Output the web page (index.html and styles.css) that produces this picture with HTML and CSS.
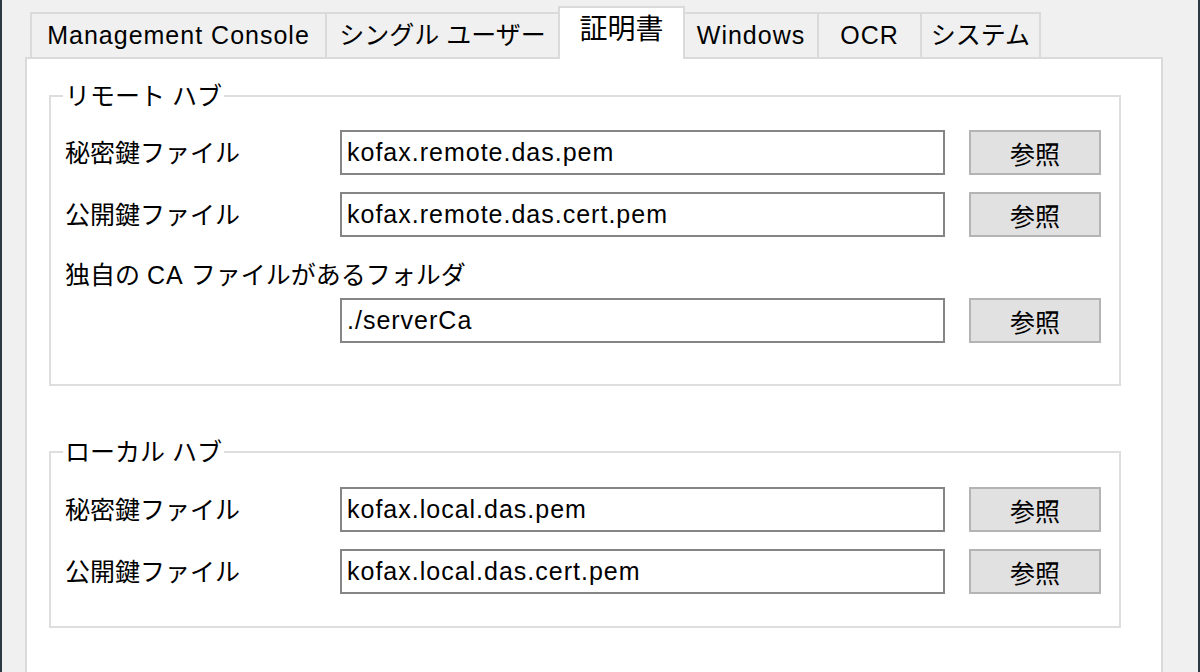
FILE: index.html
```html
<!DOCTYPE html>
<html lang="ja">
<head>
<meta charset="utf-8">
<title>証明書</title>
<link rel="stylesheet" href="styles.css">
</head>
<body>
<div class="window">
  <div class="tabctl">
    <div class="tabs">
      <div class="tab w1"><span class="lat">Management Console</span></div>
      <div class="tab w2">シングル ユーザー</div>
      <div class="tab tab-active w3">証明書</div>
      <div class="tab w4"><span class="lat">Windows</span></div>
      <div class="tab w5"><span class="lat">OCR</span></div>
      <div class="tab w6">システム</div>
    </div>
    <div class="panel">
      <fieldset class="group g1">
        <legend class="legend">リモート ハブ</legend>
        <div class="row">
          <div class="label">秘密鍵ファイル</div>
          <div class="field">kofax.remote.das.pem</div>
          <div class="btn">参照</div>
        </div>
        <div class="row">
          <div class="label">公開鍵ファイル</div>
          <div class="field">kofax.remote.das.cert.pem</div>
          <div class="btn">参照</div>
        </div>
        <div class="wide-label">独自の <span class="lat">CA</span> ファイルがあるフォルダ</div>
        <div class="row">
          <div class="label"></div>
          <div class="field">./serverCa</div>
          <div class="btn">参照</div>
        </div>
      </fieldset>
      <fieldset class="group g2">
        <legend class="legend">ローカル ハブ</legend>
        <div class="row">
          <div class="label">秘密鍵ファイル</div>
          <div class="field">kofax.local.das.pem</div>
          <div class="btn">参照</div>
        </div>
        <div class="row">
          <div class="label">公開鍵ファイル</div>
          <div class="field">kofax.local.das.cert.pem</div>
          <div class="btn">参照</div>
        </div>
      </fieldset>
    </div>
  </div>
</div>
</body>
</html>
```
FILE: styles.css
```css
html, body {
  margin: 0;
  padding: 0;
}
body {
  width: 1200px;
  height: 672px;
  overflow: hidden;
  background: #f0f0f0;
  font-family: "Liberation Sans", "Noto Sans CJK JP", sans-serif;
  font-size: 25px;
  color: #000;
}
.window {
  box-sizing: border-box;
  width: 1200px;
  height: 672px;
  border-left: 2px solid #2b3944;
  border-right: 2px solid #2b3944;
  padding-left: 23px;
  padding-top: 6px;
}
.tabctl {
  width: 1138px;
}
.tabs {
  display: flex;
  align-items: flex-end;
  height: 51px;
  padding-left: 5px;
}
.tab {
  box-sizing: border-box;
  height: 45px;
  border: 2px solid #dadada;
  border-bottom: none;
  margin-left: -2px;
  background: #f0f0f0;
  display: flex;
  align-items: center;
  justify-content: center;
  line-height: 30px;
  white-space: nowrap;
  padding-bottom: 2px;
}
.tab:first-child {
  margin-left: 0;
}
.tab-active {
  height: 53px;
  background: #fff;
  margin-bottom: -2px;
  position: relative;
  z-index: 1;
  padding-bottom: 8px;
  font-size: 28px;
}
.w1 { width: 297px; }
.w2 { width: 235px; }
.w3 { width: 127px; }
.w4 { width: 136px; }
.w5 { width: 105px; }
.w6 { width: 121px; }
.lat {
  letter-spacing: 1px;
}
.panel {
  box-sizing: border-box;
  height: 640px;
  background: #fff;
  border: 2px solid #dadada;
  padding-left: 22px;
}
.group {
  box-sizing: border-box;
  width: 1072px;
  margin: 0;
  border: 2px solid #dedede;
  padding: 19px 18px 41px 14px;
  min-inline-size: 0;
}
.g1 {
  margin-top: 22px;
}
.g2 {
  margin-top: 51px;
  padding-top: 20px;
  padding-bottom: 32px;
}
.legend {
  padding: 0 2px;
  margin-left: -2px;
  line-height: 30px;
  height: 30px;
}
.row {
  display: flex;
  align-items: center;
  height: 45px;
}
.row + .row {
  margin-top: 17px;
}
.label {
  width: 275px;
  flex: none;
  line-height: 30px;
}
.wide-label {
  margin-top: 23px;
  margin-bottom: 8px;
  height: 30px;
  line-height: 30px;
}
.field {
  box-sizing: border-box;
  width: 605px;
  height: 45px;
  flex: none;
  border: 2px solid #858585;
  background: #fff;
  padding-left: 5px;
  display: flex;
  align-items: center;
  letter-spacing: 1px;
  white-space: nowrap;
}
.btn {
  box-sizing: border-box;
  width: 132px;
  height: 45px;
  flex: none;
  margin-left: 24px;
  background: #e1e1e1;
  border: 2px solid #b4b4b4;
  display: flex;
  align-items: center;
  justify-content: center;
}
```
